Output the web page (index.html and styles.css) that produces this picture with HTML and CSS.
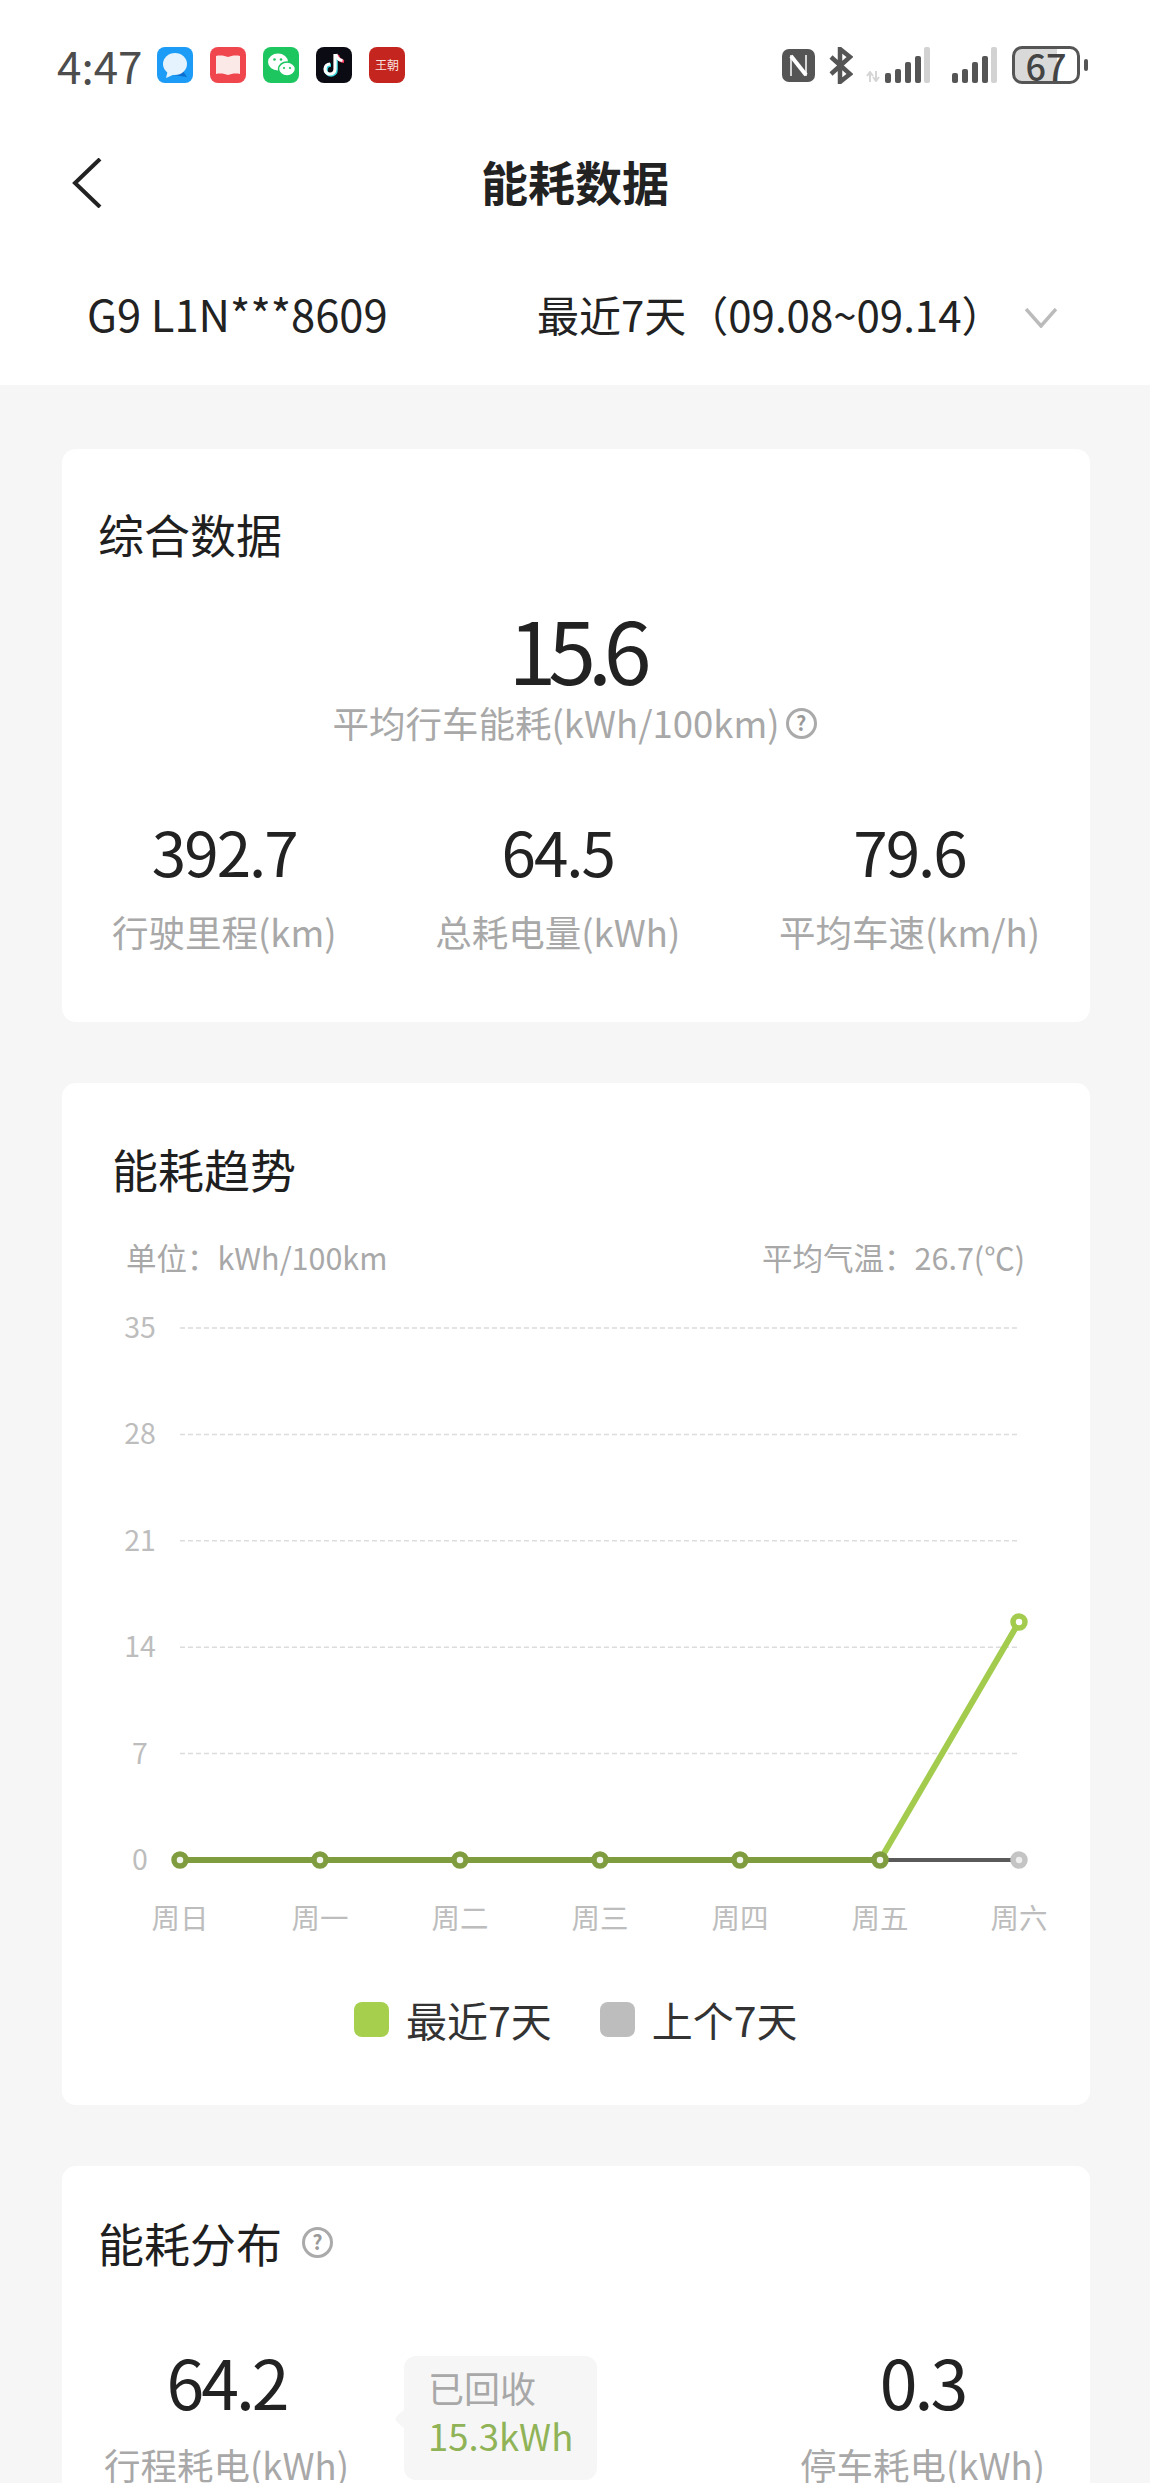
FILE: index.html
```html
<!DOCTYPE html>
<html lang="zh-CN">
<head>
    <meta charset="UTF-8">
    <title>能耗数据</title>
    <link rel="stylesheet" href="styles.css">
</head>
<body>
    <div class="page">
        <div class="top">
            <div class="status-bar">
                <div class="status-left">
                    <span class="time">4:47</span>
                    <svg class="app" viewBox="0 0 36 36"><rect width="36" height="36" rx="8" fill="#1c9cf6"/><path d="M30 30l-4-6-10 4z" fill="#0b6fd0"/><ellipse cx="18" cy="17" rx="12" ry="11" fill="#e4f3fd"/><path d="M9 31l2-8 7 4z" fill="#e4f3fd"/></svg>
                    <svg class="app" viewBox="0 0 36 36"><rect width="36" height="36" rx="8" fill="#f0464e"/><path d="M6 9c5-1 9 0 12 1 3-1 7-2 12-1v18c-5-1-9 0-12 1-3-1-7-2-12-1z" fill="#fbe9e8"/></svg>
                    <svg class="app" viewBox="0 0 36 36"><rect width="36" height="36" rx="8" fill="#1ec660"/><ellipse cx="15" cy="15" rx="10" ry="8.500" fill="#fff"/><ellipse cx="24" cy="22" rx="8.500" ry="7" fill="#fff" stroke="#1ec660" stroke-width="1.500"/><circle cx="11.500" cy="12.500" r="1.300" fill="#1ec660"/><circle cx="18" cy="12.500" r="1.300" fill="#1ec660"/><circle cx="21" cy="21" r="1.100" fill="#1ec660"/><circle cx="27" cy="21" r="1.100" fill="#1ec660"/></svg>
                    <svg class="app" viewBox="0 0 36 36"><rect width="36" height="36" rx="8" fill="#0b0b14"/><path d="M20 8v15a5 5 0 1 1-5-5" fill="none" stroke="#39d8de" stroke-width="3.600"/><path d="M21.500 8c.6 4 3 6 6.500 6.500" fill="none" stroke="#ff3a5c" stroke-width="3.200"/><path d="M19 7v15a5 5 0 1 1-5-5" fill="none" stroke="#fff" stroke-width="3.200"/><path d="M20 7c.6 4 3 6 6.500 6.500" fill="none" stroke="#fff" stroke-width="3"/></svg>
                    <span class="app app-wang">王朝</span>
                </div>
                <div class="status-right">
                    <svg class="nfc" viewBox="0 0 33 33"><rect width="33" height="33" rx="7" fill="#555"/><path d="M9 6v21M24 6v21" stroke="#fff" stroke-width="1.500"/><path d="M9 7l15 19" fill="none" stroke="#fff" stroke-width="4"/></svg>
                    <svg class="bt" viewBox="0 0 25 37"><path d="M3 10l19 17-10 8V2l10 8L3 27" fill="none" stroke="#555" stroke-width="4.500"/></svg>
                    <svg class="arrows" viewBox="0 0 14 11"><path d="M4 11V2M1 5l3-4 3 4M10 0v9M7 6l3 4 3-4" fill="none" stroke="#d5d5d5" stroke-width="2"/></svg>
                    <svg class="signal" viewBox="0 0 45 36"><rect y="26" width="6" height="10" rx="2" fill="#555"/><rect x="10" y="22" width="6" height="14" rx="2" fill="#555"/><rect x="20" y="15" width="6" height="21" rx="2" fill="#555"/><rect x="30" y="9" width="6" height="27" rx="2" fill="#555"/><rect x="39" width="6" height="36" rx="2" fill="#d2d2d2"/></svg>
                    <svg class="signal signal-two" viewBox="0 0 45 36"><rect y="26" width="6" height="10" rx="2" fill="#555"/><rect x="10" y="22" width="6" height="14" rx="2" fill="#555"/><rect x="20" y="15" width="6" height="21" rx="2" fill="#555"/><rect x="30" y="9" width="6" height="27" rx="2" fill="#555"/><rect x="39" width="6" height="36" rx="2" fill="#d2d2d2"/></svg>
                    <div class="battery"><span class="battery-num">67</span></div>
                    <i class="battery-tip"></i>
                </div>
            </div>
            <div class="nav">
                <svg class="back" viewBox="0 0 30 50"><path d="M28 1L3 25l25 24" fill="none" stroke="#222" stroke-width="4"/></svg>
                <h1 class="nav-title">能耗数据</h1>
            </div>
            <div class="filter">
                <span class="car">G9 L1N***8609</span>
                <span class="range">最近7天（09.08~09.14）</span>
                <svg class="down" viewBox="0 0 32 20"><path d="M1 1l15 17L31 1" fill="none" stroke="#bbb" stroke-width="3.500"/></svg>
            </div>
        </div>

        <div class="content">
            <section class="card card-summary">
                <h2 class="card-title">综合数据</h2>
                <div class="main-value">15.6</div>
                <div class="main-label">平均行车能耗(kWh/100km)<span class="help">?</span></div>
                <div class="stats">
                    <div class="stat">
                        <div class="stat-value">392.7</div>
                        <div class="stat-label">行驶里程(km)</div>
                    </div>
                    <div class="stat">
                        <div class="stat-value">64.5</div>
                        <div class="stat-label">总耗电量(kWh)</div>
                    </div>
                    <div class="stat">
                        <div class="stat-value">79.6</div>
                        <div class="stat-label">平均车速(km/h)</div>
                    </div>
                </div>
            </section>

            <section class="card card-trend">
                <h2 class="card-title">能耗趋势</h2>
                <div class="chart-head">
                    <span>单位：kWh/100km</span>
                    <span>平均气温：26.7(℃)</span>
                </div>
                <svg class="chart" viewBox="0 0 1028 650">
                    <g class="grid">
                        <line x1="118" y1="28" x2="957" y2="28"/>
                        <line x1="118" y1="134.400" x2="957" y2="134.400"/>
                        <line x1="118" y1="240.800" x2="957" y2="240.800"/>
                        <line x1="118" y1="347.200" x2="957" y2="347.200"/>
                        <line x1="118" y1="453.600" x2="957" y2="453.600"/>
                    </g>
                    <g class="axis-y">
                        <text x="78" y="38">35</text>
                        <text x="78" y="144">28</text>
                        <text x="78" y="251">21</text>
                        <text x="78" y="357">14</text>
                        <text x="78" y="464">7</text>
                        <text x="78" y="570">0</text>
                    </g>
                    <polyline class="line-now" points="118,560 258,560 398,560 538,560 678,560 818,560 957,322"/>
                    <polyline class="line-prev" points="118,560 258,560 398,560 538,560 678,560 818,560 957,560"/>
                    <polyline class="line-both" points="118,560 818,560"/>
                    <g class="dots-both">
                        <circle cx="118" cy="560" r="6"/>
                        <circle cx="258" cy="560" r="6"/>
                        <circle cx="398" cy="560" r="6"/>
                        <circle cx="538" cy="560" r="6"/>
                        <circle cx="678" cy="560" r="6"/>
                        <circle cx="818" cy="560" r="6"/>
                    </g>
                    <circle class="dot-now" cx="957" cy="322" r="6"/>
                    <circle class="dot-prev" cx="957" cy="560" r="6"/>
                    <g class="axis-x">
                        <text x="118" y="629">周日</text>
                        <text x="258" y="629">周一</text>
                        <text x="398" y="629">周二</text>
                        <text x="538" y="629">周三</text>
                        <text x="678" y="629">周四</text>
                        <text x="818" y="629">周五</text>
                        <text x="957" y="629">周六</text>
                    </g>
                </svg>
                <div class="legend">
                    <div class="legend-item"><i class="swatch swatch-now"></i>最近7天</div>
                    <div class="legend-item"><i class="swatch swatch-prev"></i>上个7天</div>
                </div>
            </section>

            <section class="card card-dist">
                <h2 class="card-title">能耗分布<span class="help help-title">?</span></h2>
                <div class="dist-row">
                    <div class="stat">
                        <div class="dist-value">64.2</div>
                        <div class="stat-label">行程耗电(kWh)</div>
                    </div>
                    <div class="recover">
                        <div class="recover-label">已回收</div>
                        <div class="recover-value">15.3kWh</div>
                    </div>
                    <div class="stat stat-end">
                        <div class="dist-value">0.3</div>
                        <div class="stat-label">停车耗电(kWh)</div>
                    </div>
                </div>
            </section>
        </div>
    </div>
</body>
</html>
```

FILE: styles.css
```css
* {
    box-sizing: border-box;
}
body {
    margin: 0;
    font-family: "Noto Sans CJK SC", "Noto Sans", sans-serif;
    color: #222;
    background: #f6f6f6;
}
.page {
    height: 2483px;
    overflow: hidden;
}
.top {
    background: white;
    height: 385px;
}
.status-bar {
    height: 130px;
    display: flex;
    justify-content: space-between;
    align-items: center;
    padding: 0 62px 0 57px;
}
.status-left {
    display: flex;
    align-items: center;
    gap: 17px;
}
.time {
    font-size: 44px;
    line-height: 52px;
    color: #4d4d4d;
    width: 83px;
    white-space: nowrap;
}
.app {
    width: 36px;
    height: 36px;
    display: block;
}
.app-wang {
    background: #c4251f;
    color: #f7e3df;
    font-size: 12px;
    line-height: 36px;
    text-align: center;
    border-radius: 8px;
    white-space: nowrap;
}
.status-right {
    display: flex;
    align-items: center;
}
.nfc {
    width: 33px;
    height: 33px;
    margin-right: 13px;
}
.bt {
    width: 25px;
    height: 37px;
    margin-right: 13px;
}
.arrows {
    width: 14px;
    height: 11px;
    margin: 22px 5px 0 0;
}
.signal {
    width: 45px;
    height: 36px;
    margin-right: 22px;
}
.signal-two {
    margin-right: 15px;
}
.battery {
    width: 68px;
    height: 38px;
    border: 3px solid #555;
    border-radius: 10px;
    background: linear-gradient(90deg, #d9d9d9 68%, white 68%);
    text-align: center;
    display: flex;
    align-items: center;
    justify-content: center;
}
.battery-num {
    font-size: 36px;
    line-height: 32px;
    font-weight: 500;
    color: #444;
}
.battery-tip {
    width: 4px;
    height: 12px;
    margin-left: 4px;
    border-radius: 2px;
    background: #555;
}
.nav {
    height: 106px;
    display: grid;
    grid-template-columns: 1fr auto 1fr;
    align-items: center;
    padding: 0 72px;
}
.back {
    width: 30px;
    height: 50px;
}
.nav-title {
    margin: 0 0 5px;
    font-size: 47px;
    font-weight: 700;
    color: #222;
}
.filter {
    display: flex;
    align-items: center;
    padding: 48px 0 0 87px;
    font-size: 42px;
    line-height: 60px;
    color: #222;
}
.car {
    width: 450px;
    font-size: 43.500px;
}
.range {
    width: 488px;
    white-space: nowrap;
}
.down {
    width: 32px;
    height: 20px;
    margin-top: 8px;
}
.content {
    padding: 64px 60px 0 62px;
    display: flex;
    flex-direction: column;
    gap: 61px;
}
.card {
    background: white;
    border-radius: 14px;
    flex: none;
}
.card-title {
    margin: 0;
    font-size: 46px;
    line-height: 64px;
    font-weight: 400;
    color: #1f1f1f;
    display: flex;
    align-items: center;
}
.card-summary {
    height: 573px;
    padding: 52px 50px 0 36px;
    text-align: center;
}
.main-value {
    margin-top: 38px;
    font-size: 86px;
    line-height: 90px;
    letter-spacing: -8px;
    padding-left: 14px;
}
.main-label {
    font-size: 36.500px;
    line-height: 50px;
    color: #a8a8a8;
    display: flex;
    justify-content: center;
    align-items: center;
    margin-top: 5px;
    padding-left: 11px;
}
.help {
    width: 31px;
    height: 31px;
    margin-left: 6px;
    border: 3px solid #aaa;
    border-radius: 50%;
    color: #999;
    font-size: 20px;
    line-height: 24px;
    font-weight: 700;
    text-align: center;
}
.help-title {
    margin-left: 20px;
}
.stats {
    display: flex;
    justify-content: space-between;
    margin-top: 64px;
    padding-left: 14px;
}
.stat {
    text-align: center;
}
.stat-value {
    font-size: 62px;
    line-height: 76px;
    letter-spacing: -2px;
}
.stat-label {
    font-size: 36.500px;
    line-height: 50px;
    color: #a8a8a8;
    margin-top: 19px;
    white-space: nowrap;
}
.card-trend {
    height: 1022px;
    padding-top: 53px;
}
.card-trend .card-title {
    padding-left: 50px;
}
.chart-head {
    display: flex;
    justify-content: space-between;
    padding: 0 65px 0 64px;
    margin-top: 35px;
    font-size: 30.500px;
    line-height: 44px;
    color: #a8a8a8;
}
.chart {
    display: block;
    width: 1028px;
    height: 650px;
    margin-top: 21px;
}
.grid line {
    stroke: #dcdcdc;
    stroke-width: 1.500;
    stroke-dasharray: 5 3;
}
.axis-y text,
.axis-x text {
    font-size: 28.500px;
    fill: #bdbdbd;
    text-anchor: middle;
}
.line-now {
    fill: none;
    stroke: #a3cc4e;
    stroke-width: 6;
}
.line-prev {
    fill: none;
    stroke: #5a5a5a;
    stroke-width: 4;
}
.line-both {
    fill: none;
    stroke: #7f9d3f;
    stroke-width: 6;
}
.dots-both circle {
    fill: #f2f4ee;
    stroke: #7f9d3f;
    stroke-width: 5.500;
}
.dot-now {
    fill: white;
    stroke: #a3cc4e;
    stroke-width: 5.500;
}
.dot-prev {
    fill: #eee;
    stroke: #c4c4c4;
    stroke-width: 5.500;
}
.legend {
    display: flex;
    margin-top: 41px;
    padding-left: 292px;
    gap: 48px;
}
.legend-item {
    display: flex;
    align-items: center;
    gap: 17px;
    font-size: 41px;
    line-height: 56px;
    color: #333;
}
.swatch {
    width: 35px;
    height: 35px;
    border-radius: 8px;
}
.swatch-now {
    background: #a5cf4d;
}
.swatch-prev {
    background: #bdbdbd;
}
.card-dist {
    height: 400px;
    padding: 44px 45px 0 36px;
}
.dist-row {
    display: flex;
    margin-top: 67px;
    padding-left: 6px;
}
.dist-value {
    font-size: 68px;
    line-height: 80px;
    letter-spacing: -3px;
}
.dist-row .stat-label {
    margin-top: 19px;
}
.stat-end {
    margin-left: auto;
}
.recover {
    width: 193px;
    height: 124px;
    margin: 15px 0 0 55px;
    padding: 5px 0 0 24px;
    background: #f6f6f6;
    border-radius: 12px;
    position: relative;
}
.recover::before {
    content: "";
    position: absolute;
    left: -7px;
    top: 56px;
    width: 14px;
    height: 14px;
    background: #f6f6f6;
    border-radius: 4px;
    transform: rotate(45deg);
}
.recover-label {
    font-size: 36px;
    line-height: 52px;
    color: #a8a8a8;
}
.recover-value {
    font-size: 36.500px;
    line-height: 46px;
    color: #8fb356;
}
```
